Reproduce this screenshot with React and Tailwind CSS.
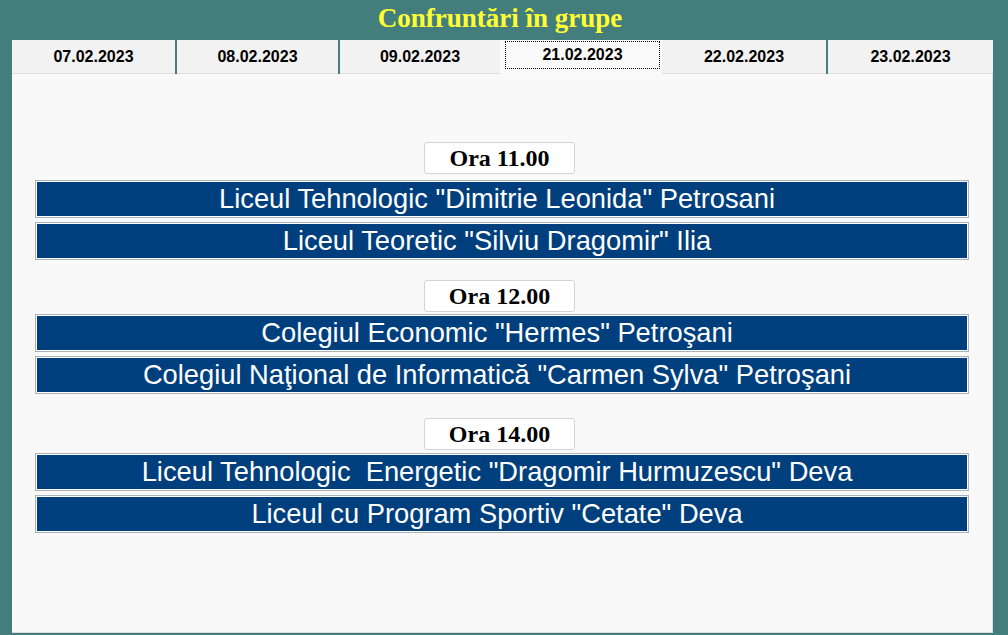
import React from "react";

const tabs = [
    { d: "07.02.2023", w: "w-[163px] mr-[2px]" },
    { d: "08.02.2023", w: "w-[161px] mr-[2px]" },
    { d: "09.02.2023", w: "w-[160px]" },
    { d: "21.02.2023", w: "w-[162px]", active: true },
    { d: "22.02.2023", w: "w-[164px] mr-[2px]" },
    { d: "23.02.2023", w: "w-[165px]" },
];

const groups = [
    { ora: "Ora 11.00", top: "mt-[68px]", gap: "mb-[6px]", teams: ['Liceul Tehnologic "Dimitrie Leonida" Petrosani', 'Liceul Teoretic "Silviu Dragomir" Ilia'] },
    { ora: "Ora 12.00", top: "mt-[20px]", gap: "mb-[2px]", teams: ['Colegiul Economic "Hermes" Petroşani', 'Colegiul Naţional de Informatică "Carmen Sylva" Petroşani'] },
    { ora: "Ora 14.00", top: "mt-[24px]", gap: "mb-[3px]", teams: ['Liceul Tehnologic\u00a0 Energetic "Dragomir Hurmuzescu" Deva', 'Liceul cu Program Sportiv "Cetate" Deva'] },
];

export default function App() {
    return (
        <div className="w-full h-[635px] bg-[#447e7c] overflow-hidden">
            <h1 className="h-[40px] flex items-center justify-center text-[27px] font-bold text-[#ffff33] leading-none pb-[3px] pr-[8px]" style={{ fontFamily: '"Liberation Serif", "Times New Roman", serif' }}>
                Confruntări în grupe
            </h1>
            <div className="ml-[12px] w-[981px]" style={{ fontFamily: '"Liberation Sans", Arial, sans-serif' }}>
                <div className="flex h-[34px]">
                    {tabs.map((t) =>
                        t.active ? (
                            <div key={t.d} className={`${t.w} bg-[#fafafa] pt-[1px] pl-[5px] pr-[2px] pb-[5px]`}>
                                <div className="h-full border border-dotted border-black flex items-center justify-center text-[16px] font-bold text-black">
                                    {t.d}
                                </div>
                            </div>
                        ) : (
                            <div key={t.d} className={`${t.w} bg-[#f2f2f2] border-b border-[#dedede] flex items-center justify-center pt-[1px] text-[16px] font-bold text-black`}>
                                {t.d}
                            </div>
                        )
                    )}
                </div>
                <div className="h-[559px] bg-[#f9f9f9] border-r border-b border-[#dcdcdc] px-[23px] flex flex-col">
                    {groups.map((g) => (
                        <div key={g.ora} className={g.top}>
                            <div className={`ml-[389px] w-[151px] h-[32px] bg-white border border-[#d4d4d4] rounded-[3px] flex items-center justify-center text-[24px] font-bold text-black leading-none ${g.gap}`} style={{ fontFamily: '"Liberation Serif", "Times New Roman", serif' }}>
                                {g.ora}
                            </div>
                            <div className="flex flex-col gap-[4px]">
                                {g.teams.map((team) => (
                                    <div key={team} className="border border-[#a9b3bd] bg-white p-px">
                                        <div className="h-[34px] bg-[#003f7e] flex items-center justify-center pr-[10px] text-[27.3px] text-white leading-none whitespace-pre">
                                            {team}
                                        </div>
                                    </div>
                                ))}
                            </div>
                        </div>
                    ))}
                </div>
            </div>
        </div>
    );
}
